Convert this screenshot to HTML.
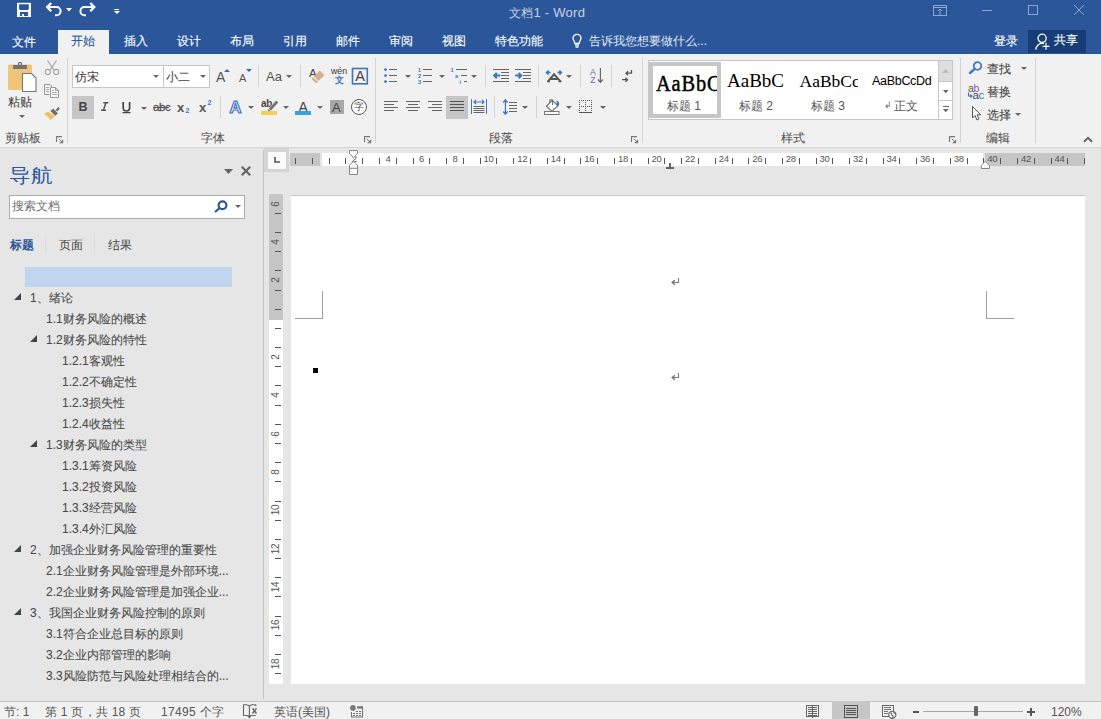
<!DOCTYPE html>
<html><head><meta charset="utf-8">
<style>
*{box-sizing:border-box}
html,body{margin:0;padding:0;width:1101px;height:719px;overflow:hidden;position:relative;font-family:"Liberation Sans",sans-serif;background:#e6e6e6}
.a{position:absolute}
.t{position:absolute;white-space:nowrap;line-height:1}
svg{position:absolute;overflow:visible}
.tab{position:absolute;top:34.8px;font-size:12px;color:#fff;line-height:1;white-space:nowrap;-webkit-text-stroke:0.12px currentColor}
.lbl{position:absolute;top:132px;font-size:12px;color:#555;line-height:1;white-space:nowrap;-webkit-text-stroke:0.08px currentColor}
.vs{position:absolute;width:1px;background:#d4d4d4}
.ni{position:absolute;font-size:12px;color:#4a4a4a;line-height:1;white-space:nowrap;-webkit-text-stroke:0.08px currentColor}
.rt{position:absolute;font-size:12px;color:#333;line-height:1;white-space:nowrap;-webkit-text-stroke:0.1px currentColor}
.dd{position:absolute;width:0;height:0;border-left:3px solid transparent;border-right:3px solid transparent;border-top:3px solid #666}
</style></head><body>
<!-- ============ TITLE BAR ============ -->
<div class="a" style="left:0;top:0;width:1101px;height:54px;background:#2b579a"></div>
<!-- save -->
<svg style="left:14px;top:0px" width="20" height="20" viewBox="0 0 20 20">
 <rect x="3" y="2.8" width="14" height="14.2" fill="#fff"/>
 <path d="M5.1,4.2 H14.8 V9 L13.9,9.9 H6 L5.1,9 Z" fill="#2b579a"/>
 <path d="M6,12 H14 V16 H10 V13.9 H8 V16 H6 Z" fill="#2b579a"/>
</svg>
<!-- undo -->
<svg style="left:42.7px;top:0px" width="20" height="20" viewBox="0 0 20 20">
 <path d="M8.2,3 L4.2,7.1 L8.2,11.2" fill="none" stroke="#fff" stroke-width="2.3"/>
 <path d="M4.8,7.1 H13.5 A4.1,4.1 0 0 1 13.5,15.3 H12" fill="none" stroke="#fff" stroke-width="2"/>
</svg>
<svg style="left:65.5px;top:7.5px" width="6" height="4" viewBox="0 0 6 4"><path d="M0,0 H6 L3,3.6 Z" fill="#fff"/></svg>
<!-- redo -->
<svg style="left:79px;top:0px" width="20" height="20" viewBox="0 0 20 20">
 <path d="M11.3,3 L15.3,7.1 L11.3,11.2" fill="none" stroke="#fff" stroke-width="2.3"/>
 <path d="M14.7,7.1 H5.5 A4.1,4.1 0 0 0 5.5,15.3 H7" fill="none" stroke="#fff" stroke-width="2"/>
</svg>
<!-- customize -->
<div class="a" style="left:114px;top:9px;width:5px;height:1px;background:#fff"></div>
<div class="dd" style="left:114px;top:11px;border-top-color:#fff;border-top-width:3.5px"></div>
<div class="t" style="left:509px;top:7px;font-size:12px;color:#c8d2e4">文档</div><div class="t" style="left:533.5px;top:5.8px;font-size:13px;color:#c8d2e4;letter-spacing:0.25px">1 - Word</div>
<!-- window controls -->
<svg style="left:933px;top:5px" width="15" height="11" viewBox="0 0 15 11">
 <rect x="0.5" y="0.5" width="13" height="10" fill="none" stroke="#8ea6cc" stroke-width="1"/>
 <path d="M0.5,2.5 H13.5 M7,4 V10 M5,6 L7,4 L9,6" fill="none" stroke="#8ea6cc" stroke-width="1"/>
</svg>
<div class="a" style="left:982px;top:10px;width:10px;height:1px;background:#8ea6cc"></div>
<div class="a" style="left:1028px;top:5px;width:10px;height:10px;border:1px solid #8ea6cc"></div>
<svg style="left:1074px;top:5px" width="10" height="10" viewBox="0 0 10 10">
 <path d="M0,0 L10,10 M10,0 L0,10" stroke="#8ea6cc" stroke-width="1"/>
</svg>
<!-- tabs -->
<div class="a" style="left:58px;top:30px;width:51px;height:24px;background:#f1f1f1"></div>
<div class="tab" style="left:12px;top:35.7px">文件</div>
<div class="tab" style="left:71px;color:#2b579a">开始</div>
<div class="tab" style="left:124px">插入</div>
<div class="tab" style="left:177px">设计</div>
<div class="tab" style="left:230px">布局</div>
<div class="tab" style="left:283px">引用</div>
<div class="tab" style="left:336px">邮件</div>
<div class="tab" style="left:389px">审阅</div>
<div class="tab" style="left:442px">视图</div>
<div class="tab" style="left:495px">特色功能</div>
<svg style="left:572px;top:34px" width="10" height="14" viewBox="0 0 10 14">
 <path d="M2.7,9.3 C2.7,7 1,5.8 1,4.3 A4,4 0 0 1 9,4.3 C9,5.8 7.3,7 7.3,9.3 Z M3,11 H7 M3.5,13 H6.5" fill="none" stroke="#fff" stroke-width="1.3"/>
</svg>
<div class="tab" style="left:589px;color:#e4eaf3;-webkit-text-stroke:0">告诉我您想要做什么...</div>
<div class="tab" style="left:994px">登录</div>
<div class="a" style="left:1028px;top:30px;width:58px;height:23px;background:#173d76"></div>
<svg style="left:1035px;top:33px" width="17" height="18" viewBox="0 0 17 18">
 <circle cx="7.1" cy="5.3" r="4.1" fill="none" stroke="#fff" stroke-width="1.3"/>
 <path d="M0.8,16.6 C1.5,12.5 4,10.3 7.2,10.3 C7.8,10.3 8.3,10.4 8.8,10.5" fill="none" stroke="#fff" stroke-width="1.3"/>
 <path d="M11,9.8 V16.8 M7.5,13.3 H14.5" stroke="#fff" stroke-width="1.2"/>
</svg>
<div class="tab" style="left:1054px;top:34.3px">共享</div>
<!-- ============ RIBBON ============ -->
<div class="a" style="left:0;top:54px;width:1101px;height:94px;background:#f1f1f1;border-bottom:1px solid #d6d6d6"></div>
<!-- clipboard group -->
<svg style="left:8px;top:61px" width="30" height="32" viewBox="0 0 30 32">
 <rect x="0" y="3.5" width="24" height="25.5" rx="1.5" fill="#f0c57a"/>
 <path d="M5,4 H19 V8 H5 Z" fill="#737373"/>
 <rect x="10" y="1" width="4" height="4" rx="1" fill="#737373"/>
 <rect x="11.2" y="2.2" width="1.6" height="1.6" fill="#f1f1f1"/>
 <path d="M14.5,12.5 H23.5 L28,17 V30.5 H14.5 Z" fill="#fff" stroke="#777" stroke-width="1.1"/>
</svg>
<div class="rt" style="left:8px;top:96px;color:#444">粘贴</div>
<div class="dd" style="left:19px;top:115px;border-top-color:#666"></div>
<svg style="left:44px;top:60px" width="16" height="16" viewBox="0 0 16 16">
 <path d="M3.5,0.5 L10,10 M12.5,0.5 L6,10" stroke="#a6a6a6" stroke-width="1.3"/>
 <circle cx="3.8" cy="12" r="2.6" fill="none" stroke="#a6a6a6" stroke-width="1.1"/>
 <circle cx="12.2" cy="12" r="2.6" fill="none" stroke="#a6a6a6" stroke-width="1.1"/>
</svg>
<svg style="left:40px;top:80px" width="24" height="44" viewBox="0 0 24 44">
 <path d="M4.5,4.5 H10 L11.5,6 V7" fill="none" stroke="#999" stroke-width="1"/>
 <path d="M4.5,4.5 V14.5 H9.5" fill="none" stroke="#999" stroke-width="1"/>
 <path d="M10.5,7.5 H15.5 L18.5,10.5 V17.5 H10.5 Z" fill="#fff" stroke="#999" stroke-width="1"/>
 <path d="M15.5,7.5 V10.5 H18.5" fill="none" stroke="#999" stroke-width="1"/>
 <g fill="#a6a6a6" shape-rendering="crispEdges"><rect x="6" y="7" width="3" height="1"/><rect x="6" y="9" width="3" height="1"/><rect x="6" y="11" width="3" height="1"/>
 <rect x="12" y="10" width="2" height="1"/><rect x="12" y="12" width="5" height="1"/><rect x="12" y="14" width="5" height="1"/></g>
 <path d="M4,33.4 L8,31.8 L15,36.1 L11,40.1 Z" fill="#f0c060"/>
 <path d="M10.4,30.9 L13.2,28.5 L18,33.4 L15.3,35.8 Z" fill="#6e6e6e"/>
 <path d="M15.6,30 L18.4,27 L19.9,28.8 L17.1,31.5 Z" fill="#6e6e6e"/>
</svg>
<div class="lbl" style="left:5px">剪贴板</div>
<svg style="left:56px;top:136px" width="8" height="8" viewBox="0 0 8 8"><path d="M0.5,6 V0.6 H6" fill="none" stroke="#777" stroke-width="1.1"/><path d="M7.2,3.2 V7.2 H3.2 Z" fill="#777"/><path d="M2.8,2.8 L5.5,5.5" stroke="#777" stroke-width="1"/></svg>
<div class="vs" style="left:67px;top:58px;height:85px"></div>

<!-- font group -->
<div class="a" style="left:72px;top:65px;width:92px;height:23px;background:#fff;border:1px solid #c6c6c6"></div>
<div class="a" style="left:163px;top:65px;width:47px;height:23px;background:#fff;border:1px solid #c6c6c6"></div>
<div class="rt" style="left:75px;top:70.8px;color:#444">仿宋</div>
<div class="dd" style="left:153px;top:75px"></div>
<div class="rt" style="left:166px;top:70.8px;color:#444">小二</div>
<div class="dd" style="left:200px;top:75px"></div>
<!-- grow/shrink -->
<div class="t" style="left:216px;top:70px;font-size:14px;color:#555">A</div>
<svg style="left:224px;top:69px" width="6" height="4" viewBox="0 0 6 4"><path d="M0,3 L3,0 L6,3 Z" fill="#2b6cc4"/></svg>
<div class="t" style="left:239px;top:73px;font-size:11px;color:#555">A</div>
<svg style="left:246px;top:69px" width="6" height="4" viewBox="0 0 6 4"><path d="M0,0 L6,0 L3,3 Z" fill="#2b6cc4"/></svg>
<div class="vs" style="left:258px;top:65px;height:22px"></div>
<div class="t" style="left:266px;top:70px;font-size:13px;color:#555">Aa</div>
<div class="dd" style="left:286px;top:75px"></div>
<div class="vs" style="left:300px;top:65px;height:22px"></div>
<!-- clear formatting -->
<div class="t" style="left:309px;top:68px;font-size:11.5px;color:#444">A</div>
<svg style="left:305px;top:62px" width="67" height="26" viewBox="0 0 67 26">
 <g transform="translate(13,15) rotate(-45)">
  <rect x="-6" y="-3.3" width="12" height="6.6" rx="1" fill="#d9b08c"/>
  <rect x="-3.6" y="-4" width="1.1" height="8" fill="#f1f1f1"/>
 </g>
 <rect x="47.5" y="6.5" width="14.8" height="15.3" fill="none" stroke="#3f74ba" stroke-width="1.6"/>
</svg>
<div class="t" style="left:331px;top:67px;font-size:8.8px;color:#333;letter-spacing:0px">wén</div>
<div class="t" style="left:334.5px;top:75.5px;font-size:9px;color:#3f74ba;font-weight:bold">文</div>
<div class="t" style="left:355.2px;top:68.6px;font-size:14.5px;color:#444">A</div>
<!-- row 2 -->
<div class="a" style="left:72px;top:96px;width:22px;height:23px;background:#c6c6c6"></div>
<div class="t" style="left:78.5px;top:100.8px;font-size:12.5px;font-weight:bold;color:#444">B</div>
<svg style="left:70px;top:94px" width="150" height="28" viewBox="0 0 150 28">
 <path d="M33.3,8.7 H38.3 M31,16.3 H36 M35.9,8.7 L33.4,16.3" fill="none" stroke="#555" stroke-width="1.5"/>
 <path d="M53.2,8 V13.5 C53.2,16 54.5,17 56.4,17 C58.3,17 59.6,16 59.6,13.5 V8" fill="none" stroke="#444" stroke-width="1.7"/>
 <rect x="52.5" y="18" width="8" height="1.2" fill="#444"/>
 <rect x="83" y="13" width="16" height="1" fill="#555"/>
</svg>
<div class="dd" style="left:141px;top:107px"></div>
<div class="t" style="left:153px;top:101.5px;font-size:11.5px;color:#555;letter-spacing:-0.4px;-webkit-text-stroke:0.3px #555">abc</div>
<div class="t" style="left:177px;top:100.5px;font-size:13px;font-weight:bold;color:#555">x</div>
<div class="t" style="left:185.5px;top:107px;font-size:7px;font-weight:bold;color:#3f74ba">2</div>
<div class="t" style="left:199px;top:100.5px;font-size:13px;font-weight:bold;color:#555">x</div>
<div class="t" style="left:207.5px;top:99px;font-size:7px;font-weight:bold;color:#3f74ba">2</div>
<div class="vs" style="left:220px;top:96px;height:22px"></div>
<!-- text effects -->
<svg style="left:228px;top:98px" width="16" height="17" viewBox="0 0 16 17"><text x="1.6" y="14.6" font-size="16.5" font-weight="bold" font-family="Liberation Sans" fill="#fff" stroke="#3f74ba" stroke-width="1.2">A</text></svg>
<div class="dd" style="left:248px;top:106px"></div>
<!-- highlight -->
<div class="t" style="left:261px;top:98.5px;font-size:10px;color:#444;font-weight:bold;letter-spacing:-0.3px">ab</div>
<svg style="left:260px;top:96px" width="20" height="18" viewBox="0 0 20 18">
 <path d="M8.6,12.6 L16.2,4.2 L18.6,6.4 L11,14.8 Z" fill="#707070" stroke="#f1f1f1" stroke-width="0.6"/>
 <path d="M8.4,13 L10.6,15 L7.5,16.2 Z" fill="#707070"/>
</svg>
<div class="a" style="left:261px;top:111px;width:16px;height:4px;background:#f5cf4f"></div>
<div class="dd" style="left:283px;top:106px"></div>
<!-- font color -->
<div class="t" style="left:298.5px;top:100px;font-size:14px;color:#444">A</div>
<div class="a" style="left:295px;top:111px;width:16px;height:4px;background:#3aa0e4"></div>
<div class="dd" style="left:317px;top:106px"></div>
<!-- char shading -->
<div class="a" style="left:330px;top:100px;width:14px;height:14px;background:#a8a8a8"></div>
<div class="t" style="left:332px;top:101px;font-size:13px;color:#444">A</div>
<!-- enclosed -->
<svg style="left:351px;top:99px" width="16" height="16" viewBox="0 0 16 16"><circle cx="8" cy="8" r="7.5" fill="#fff" stroke="#555" stroke-width="1"/></svg>
<div class="t" style="left:354px;top:102px;font-size:10px;color:#444">字</div>
<div class="lbl" style="left:201px">字体</div>
<svg style="left:364px;top:136px" width="8" height="8" viewBox="0 0 8 8"><path d="M0.5,6 V0.6 H6" fill="none" stroke="#777" stroke-width="1.1"/><path d="M7.2,3.2 V7.2 H3.2 Z" fill="#777"/><path d="M2.8,2.8 L5.5,5.5" stroke="#777" stroke-width="1"/></svg>
<div class="vs" style="left:375px;top:58px;height:85px"></div>
<!-- paragraph group -->
<svg style="left:380px;top:62px" width="100" height="26" viewBox="0 0 100 26" shape-rendering="crispEdges">
 <g fill="#666"><rect x="9" y="7" width="8" height="1.3"/><rect x="9" y="13" width="8" height="1.3"/><rect x="9" y="19" width="8" height="1.3"/>
 <rect x="43" y="7" width="9" height="1.3"/><rect x="43" y="13" width="9" height="1.3"/><rect x="43" y="19" width="9" height="1.3"/>
 <rect x="76" y="7" width="11" height="1.3"/><rect x="81" y="13" width="6" height="1.3"/><rect x="84" y="19" width="3" height="1.3"/></g>
</svg>
<svg style="left:380px;top:62px" width="100" height="26" viewBox="0 0 100 26">
 <g fill="#3f74ba"><circle cx="5.5" cy="7.6" r="1.4"/><circle cx="5.5" cy="13.6" r="1.4"/><circle cx="5.5" cy="19.6" r="1.4"/></g>
 <g fill="#3f74ba" font-family="Liberation Sans" font-weight="bold" font-size="5.5">
 <text x="38" y="10">1</text><text x="38" y="16">2</text><text x="38" y="22">3</text>
 <text x="70.5" y="10">1</text><text x="75" y="16">a</text><text x="79.5" y="22">i</text></g>
</svg>
<div class="dd" style="left:405px;top:75px"></div>
<div class="dd" style="left:439px;top:75px"></div>
<div class="dd" style="left:471px;top:75px"></div>
<div class="vs" style="left:485px;top:65px;height:22px"></div>
<svg style="left:490px;top:64px" width="50" height="22" viewBox="0 0 50 22" shape-rendering="crispEdges">
 <g fill="#666"><rect x="3" y="5" width="16" height="1.2"/><rect x="11" y="8" width="8" height="1.2"/><rect x="11" y="11" width="8" height="1.2"/><rect x="11" y="14" width="8" height="1.2"/><rect x="3" y="17" width="16" height="1.2"/>
 <rect x="25" y="5" width="16" height="1.2"/><rect x="33" y="8" width="8" height="1.2"/><rect x="33" y="11" width="8" height="1.2"/><rect x="33" y="14" width="8" height="1.2"/><rect x="25" y="17" width="16" height="1.2"/></g>
</svg>
<svg style="left:490px;top:64px" width="50" height="22" viewBox="0 0 50 22">
 <path d="M10.3,11.6 H4.5 M6.8,9 L4.2,11.6 L6.8,14.2" fill="none" stroke="#3f74ba" stroke-width="2"/>
 <path d="M25.2,11.6 H31 M28.7,9 L31.3,11.6 L28.7,14.2" fill="none" stroke="#3f74ba" stroke-width="2"/>
</svg>
<div class="vs" style="left:538px;top:65px;height:22px"></div>
<svg style="left:540px;top:64px" width="96" height="22" viewBox="0 0 96 22">
 <path d="M6.5,8.5 H10.5 M8.6,6.6 L6.6,8.6 L8.6,10.6" fill="none" stroke="#3f74ba" stroke-width="1.6"/>
 <path d="M21.5,8.5 H17.5 M19.4,6.6 L21.4,8.6 L19.4,10.6" fill="none" stroke="#3f74ba" stroke-width="1.6"/>
 <path d="M8,17.4 L14,10.3 L20.5,17.4 M10.5,15 H17.5" fill="none" stroke="#555" stroke-width="2"/>
 <path d="M7,17.4 H10 M18.5,17.4 H21.5" stroke="#555" stroke-width="1.5"/>
 <text x="50" y="10.6" font-size="8.8" font-family="Liberation Sans" fill="#3f74ba">A</text>
 <text x="50.3" y="18.8" font-size="8.5" font-family="Liberation Sans" fill="#7d5fa8">Z</text>
 <path d="M60.4,4 V18.5 M57.9,15.5 L60.4,18.3 L62.9,15.5" fill="none" stroke="#666" stroke-width="1.2"/>
 <path d="M91.5,6 V9.2 H86 M88,7.2 L86,9.2 L88,11.2" fill="none" stroke="#555" stroke-width="1.3"/>
 <path d="M82,15.7 H87.5 M85.5,13.7 L87.5,15.7 L85.5,17.7" fill="none" stroke="#555" stroke-width="1.3"/>
</svg>
<div class="dd" style="left:566px;top:75px"></div>
<div class="vs" style="left:580px;top:65px;height:22px"></div>
<div class="vs" style="left:611px;top:65px;height:22px"></div>
<!-- row 2 -->
<svg style="left:384px;top:101px" width="15" height="12" viewBox="0 0 15 12">
 <path d="M0,0.5 H14 M0,3.5 H10 M0,6.5 H14 M0,9.5 H10" stroke="#666" stroke-width="1"/>
</svg>
<svg style="left:406px;top:101px" width="15" height="12" viewBox="0 0 15 12">
 <path d="M0,0.5 H14 M2,3.5 H12 M0,6.5 H14 M2,9.5 H12" stroke="#666" stroke-width="1"/>
</svg>
<svg style="left:428px;top:101px" width="15" height="12" viewBox="0 0 15 12">
 <path d="M0,0.5 H14 M4,3.5 H14 M0,6.5 H14 M4,9.5 H14" stroke="#666" stroke-width="1"/>
</svg>
<div class="a" style="left:446px;top:96px;width:22px;height:23px;background:#c6c6c6"></div>
<svg style="left:450px;top:101px" width="15" height="12" viewBox="0 0 15 12">
 <path d="M0,0.5 H14 M0,3.5 H14 M0,6.5 H14 M0,9.5 H14" stroke="#555" stroke-width="1"/>
</svg>
<svg style="left:471px;top:99px" width="16" height="16" viewBox="0 0 16 16">
 <path d="M0.5,0 V15 M15.5,0 V15" stroke="#3c78c3" stroke-width="1"/>
 <path d="M3,3 H13 M5,1 L3,3 L5,5 M11,1 L13,3 L11,5" fill="none" stroke="#3c78c3" stroke-width="1.2"/>
 <path d="M2.5,7.5 H13.5 M2.5,9.5 H13.5 M2.5,11.5 H13.5 M2.5,13.5 H13.5" stroke="#666" stroke-width="1"/>
</svg>
<div class="vs" style="left:494px;top:96px;height:22px"></div>
<svg style="left:498px;top:96px" width="112" height="22" viewBox="0 0 112 22">
 <path d="M7.4,3.8 V18.2" stroke="#3f74ba" stroke-width="1.2"/>
 <path d="M5.2,6.4 L7.4,4 L9.6,6.4 M5.2,15.6 L7.4,18 L9.6,15.6" fill="none" stroke="#3f74ba" stroke-width="1.5"/>
 <g fill="#666" shape-rendering="crispEdges"><rect x="11" y="6" width="8" height="1.2"/><rect x="11" y="9" width="8" height="1.2"/><rect x="11" y="12" width="8" height="1.2"/><rect x="11" y="15" width="8" height="1.2"/></g>
 <path d="M48.5,10.2 L54.3,4.4 L59.8,9.8 L54,15.3 Z" fill="#fff" stroke="#666" stroke-width="1.1"/>
 <path d="M51.8,7 V3.8 H54.6 V9" fill="none" stroke="#666" stroke-width="1"/>
 <path d="M58.5,4.5 C61.5,5.5 62,8 60,10.5 L58.8,9 Z" fill="#3f74ba"/>
 <rect x="46.5" y="15.5" width="14.5" height="3" fill="#fff" stroke="#777" stroke-width="1"/>
</svg>
<svg style="left:0;top:0" width="1101" height="150" viewBox="0 0 1101 150" shape-rendering="crispEdges">
 <g fill="#555"><rect x="579" y="100" width="1" height="1"/><rect x="579" y="106" width="1" height="1"/><rect x="581" y="100" width="1" height="1"/><rect x="581" y="106" width="1" height="1"/><rect x="583" y="100" width="1" height="1"/><rect x="583" y="106" width="1" height="1"/><rect x="585" y="100" width="1" height="1"/><rect x="585" y="106" width="1" height="1"/><rect x="587" y="100" width="1" height="1"/><rect x="587" y="106" width="1" height="1"/><rect x="589" y="100" width="1" height="1"/><rect x="589" y="106" width="1" height="1"/><rect x="591" y="100" width="1" height="1"/><rect x="591" y="106" width="1" height="1"/><rect x="579" y="102" width="1" height="1"/><rect x="585" y="102" width="1" height="1"/><rect x="591" y="102" width="1" height="1"/><rect x="579" y="104" width="1" height="1"/><rect x="585" y="104" width="1" height="1"/><rect x="591" y="104" width="1" height="1"/><rect x="579" y="106" width="1" height="1"/><rect x="585" y="106" width="1" height="1"/><rect x="591" y="106" width="1" height="1"/><rect x="579" y="108" width="1" height="1"/><rect x="585" y="108" width="1" height="1"/><rect x="591" y="108" width="1" height="1"/><rect x="579" y="110" width="1" height="1"/><rect x="585" y="110" width="1" height="1"/><rect x="591" y="110" width="1" height="1"/><rect x="579" y="112" width="13" height="1.2"/></g>
</svg>
<div class="dd" style="left:522px;top:106px"></div>
<div class="vs" style="left:536px;top:96px;height:22px"></div>
<div class="dd" style="left:566px;top:106px"></div>
<div class="dd" style="left:600px;top:106px"></div>
<div class="lbl" style="left:489px">段落</div>
<svg style="left:631px;top:136px" width="8" height="8" viewBox="0 0 8 8"><path d="M0.5,6 V0.6 H6" fill="none" stroke="#777" stroke-width="1.1"/><path d="M7.2,3.2 V7.2 H3.2 Z" fill="#777"/><path d="M2.8,2.8 L5.5,5.5" stroke="#777" stroke-width="1"/></svg>
<div class="vs" style="left:642px;top:58px;height:85px"></div>

<!-- styles gallery -->
<div class="a" style="left:648px;top:60px;width:291px;height:60px;background:#fff;border:1px solid #c6c6c6"></div>
<div class="a" style="left:649px;top:62px;width:72px;height:56px;border:4px solid #c6c6c6"></div>
<div class="a" style="left:653px;top:66px;width:64px;height:30px;overflow:hidden"><div class="t" style="left:3px;top:5px;font-size:24px;font-family:'Liberation Serif',serif;color:#000;transform:scaleX(0.85);transform-origin:0 0;letter-spacing:1px;-webkit-text-stroke:0.5px #000">AaBbCcDd</div></div>
<div class="t" style="left:667px;top:100px;font-size:12px;color:#555">标题 1</div>
<div class="t" style="left:727px;top:71.3px;font-size:19px;font-family:'Liberation Serif',serif;color:#000">AaBbC</div>
<div class="t" style="left:739px;top:100px;font-size:12px;color:#555">标题 2</div>
<div class="a" style="left:799px;top:70px;width:59px;height:20px;overflow:hidden"><div class="t" style="left:0.5px;top:3px;font-size:17.5px;font-family:'Liberation Serif',serif;color:#000">AaBbCc</div></div>
<div class="t" style="left:811px;top:100px;font-size:12px;color:#555">标题 3</div>
<div class="t" style="left:872px;top:75px;font-size:12.5px;color:#000;letter-spacing:-0.3px">AaBbCcDd</div>
<div class="t" style="left:883.5px;top:101px;font-size:9px;color:#666">↲</div>
<div class="t" style="left:894px;top:100px;font-size:12px;color:#555">正文</div>
<!-- gallery scroll -->
<div class="a" style="left:938px;top:60px;width:15px;height:60px;background:#fff;border:1px solid #c6c6c6"></div>
<div class="a" style="left:939px;top:61px;width:13px;height:20px;background:#dedede"></div>
<div class="a" style="left:939px;top:81px;width:13px;height:1px;background:#c6c6c6"></div>
<div class="a" style="left:939px;top:100px;width:13px;height:1px;background:#c6c6c6"></div>
<svg style="left:942px;top:69px" width="7" height="4" viewBox="0 0 7 4"><path d="M0,4 L3.5,0 L7,4 Z" fill="#bbb"/></svg>
<svg style="left:943px;top:89.5px" width="6" height="4" viewBox="0 0 6 4"><path d="M0,0 H5.5 L2.75,3.2 Z" fill="#666"/></svg>
<div class="a" style="left:943px;top:106px;width:6px;height:1px;background:#666"></div>
<svg style="left:943px;top:109px" width="6" height="4" viewBox="0 0 6 4"><path d="M0,0 H5.5 L2.75,3.2 Z" fill="#666"/></svg>
<div class="lbl" style="left:781px">样式</div>
<svg style="left:949px;top:136px" width="8" height="8" viewBox="0 0 8 8"><path d="M0.5,6 V0.6 H6" fill="none" stroke="#777" stroke-width="1.1"/><path d="M7.2,3.2 V7.2 H3.2 Z" fill="#777"/><path d="M2.8,2.8 L5.5,5.5" stroke="#777" stroke-width="1"/></svg>
<div class="vs" style="left:960px;top:58px;height:85px"></div>

<!-- editing -->
<svg style="left:969px;top:61px" width="14" height="13" viewBox="0 0 14 13">
 <circle cx="8.5" cy="5" r="3.8" fill="none" stroke="#3c78c3" stroke-width="1.8"/>
 <path d="M5.8,7.8 L1,12" stroke="#3c78c3" stroke-width="2.4" stroke-linecap="round"/>
</svg>
<div class="rt" style="left:987px;top:62.7px;color:#444">查找</div>
<div class="dd" style="left:1021px;top:67px"></div>
<div class="t" style="left:968px;top:82.8px;font-size:10.5px;color:#555;letter-spacing:-0.3px">a<span style="color:#7d5fa8">b</span></div>
<div class="t" style="left:972.5px;top:89.5px;font-size:11.5px;color:#444;letter-spacing:-0.5px">a<span style="color:#3f74ba">c</span></div>
<svg style="left:967px;top:92px" width="6" height="6" viewBox="0 0 6 6"><path d="M1.5,0.5 V4 H5 M3.3,2.5 L5,4 L3.3,5.5" fill="none" stroke="#3f74ba" stroke-width="1.1"/></svg>
<div class="rt" style="left:987px;top:86px;color:#444">替换</div>
<svg style="left:972px;top:106px" width="10" height="15" viewBox="0 0 10 15">
 <path d="M0.5,0.5 V12 L3,9.5 L5,14 L7,13 L5,8.8 L8.8,8.8 Z" fill="#fff" stroke="#555" stroke-width="1" stroke-linejoin="round"/>
</svg>
<div class="rt" style="left:987px;top:108.5px;color:#444">选择</div>
<div class="dd" style="left:1015px;top:113px"></div>
<div class="lbl" style="left:986px">编辑</div>
<div class="vs" style="left:1035px;top:58px;height:85px"></div>
<svg style="left:1083px;top:136px" width="10" height="7" viewBox="0 0 10 7"><path d="M1,5.8 L5,1.8 L9,5.8" fill="none" stroke="#666" stroke-width="2"/></svg>
<!-- ============ NAV PANE ============ -->
<div class="a" style="left:263px;top:150px;width:1px;height:549px;background:#c4c4c4"></div>
<div class="t" style="left:8.5px;top:165px;font-size:21px;color:#2b579a;transform:scale(1.04,0.92);transform-origin:0 0">导航</div>
<svg style="left:224px;top:169px" width="9" height="5" viewBox="0 0 9 5"><path d="M0,0 H9 L4.5,5 Z" fill="#666"/></svg>
<svg style="left:241px;top:166px" width="10" height="10" viewBox="0 0 10 10"><path d="M0.8,0.8 L9.2,9.2 M9.2,0.8 L0.8,9.2" stroke="#666" stroke-width="2.2"/></svg>
<div class="a" style="left:9px;top:195px;width:236px;height:24px;background:#fff;border:1px solid #ababab"></div>
<div class="t" style="left:12px;top:200px;font-size:12px;color:#707070">搜索文档</div>
<svg style="left:213px;top:200px" width="15" height="13" viewBox="0 0 15 13">
 <circle cx="9.5" cy="5.2" r="3.9" fill="none" stroke="#2b579a" stroke-width="2.2"/>
 <path d="M6.7,8 L2,12" stroke="#2b579a" stroke-width="2.2" stroke-linecap="butt"/>
</svg>
<div class="dd" style="left:235px;top:205px"></div>
<div class="t" style="left:10px;top:238.7px;font-size:12px;color:#2b579a;font-weight:bold">标题</div>
<div class="a" style="left:45px;top:234px;width:1px;height:19px;background:#dcdcdc"></div>
<div class="t" style="left:59px;top:238.7px;font-size:12px;color:#444">页面</div>
<div class="a" style="left:94px;top:234px;width:1px;height:19px;background:#dcdcdc"></div>
<div class="t" style="left:108px;top:238.7px;font-size:12px;color:#444">结果</div>
<div class="a" style="left:25px;top:267px;width:207px;height:20px;background:#c1d5f0"></div>
<!-- tree -->
<svg style="left:14px;top:293px" width="7" height="7" viewBox="0 0 7 7"><path d="M7,0 V7 H0 Z" fill="#444"/></svg>
<div class="ni" style="left:30px;top:292px">1、绪论</div>
<div class="ni" style="left:46px;top:313px">1.1财务风险的概述</div>
<svg style="left:30px;top:335px" width="7" height="7" viewBox="0 0 7 7"><path d="M7,0 V7 H0 Z" fill="#444"/></svg>
<div class="ni" style="left:46px;top:334px">1.2财务风险的特性</div>
<div class="ni" style="left:62px;top:355px">1.2.1客观性</div>
<div class="ni" style="left:62px;top:376px">1.2.2不确定性</div>
<div class="ni" style="left:62px;top:397px">1.2.3损失性</div>
<div class="ni" style="left:62px;top:418px">1.2.4收益性</div>
<svg style="left:30px;top:440px" width="7" height="7" viewBox="0 0 7 7"><path d="M7,0 V7 H0 Z" fill="#444"/></svg>
<div class="ni" style="left:46px;top:439px">1.3财务风险的类型</div>
<div class="ni" style="left:62px;top:460px">1.3.1筹资风险</div>
<div class="ni" style="left:62px;top:481px">1.3.2投资风险</div>
<div class="ni" style="left:62px;top:502px">1.3.3经营风险</div>
<div class="ni" style="left:62px;top:523px">1.3.4外汇风险</div>
<svg style="left:14px;top:545px" width="7" height="7" viewBox="0 0 7 7"><path d="M7,0 V7 H0 Z" fill="#444"/></svg>
<div class="ni" style="left:30px;top:544px">2、加强企业财务风险管理的重要性</div>
<div class="ni" style="left:46px;top:565px">2.1企业财务风险管理是外部环境...</div>
<div class="ni" style="left:46px;top:586px">2.2企业财务风险管理是加强企业...</div>
<svg style="left:14px;top:608px" width="7" height="7" viewBox="0 0 7 7"><path d="M7,0 V7 H0 Z" fill="#444"/></svg>
<div class="ni" style="left:30px;top:607px">3、我国企业财务风险控制的原则</div>
<div class="ni" style="left:46px;top:628px">3.1符合企业总目标的原则</div>
<div class="ni" style="left:46px;top:649px">3.2企业内部管理的影响</div>
<div class="ni" style="left:46px;top:670px">3.3风险防范与风险处理相结合的...</div>

<!-- ============ RULERS ============ -->
<div class="a" style="left:264px;top:148px;width:25px;height:24px;background:#d4d4d4"></div>
<div class="a" style="left:268px;top:152px;width:18px;height:17px;background:#fafafa"></div>
<svg style="left:274px;top:157px" width="6" height="6" viewBox="0 0 6 6"><path d="M1,0 V5 H6" fill="none" stroke="#555" stroke-width="1.6"/></svg>
<div class="a" style="left:322px;top:153px;width:661px;height:13px;background:#fff"></div>
<div class="a" style="left:290px;top:153px;width:30px;height:13px;background:#c6c6c6"></div>
<div class="a" style="left:985px;top:153px;width:100px;height:13px;background:#c6c6c6"></div>
<div class="a" style="left:295px;top:158px;width:1px;height:6px;background:#555"></div>
<div class="a" style="left:312px;top:158px;width:1px;height:6px;background:#555"></div>
<div class="a" style="left:329px;top:158px;width:1px;height:6px;background:#555"></div>
<div class="a" style="left:345px;top:158px;width:1px;height:6px;background:#555"></div>
<div class="a" style="left:362px;top:158px;width:1px;height:6px;background:#555"></div>
<div class="a" style="left:379px;top:158px;width:1px;height:6px;background:#555"></div>
<div class="a" style="left:396px;top:158px;width:1px;height:6px;background:#555"></div>
<div class="a" style="left:413px;top:158px;width:1px;height:6px;background:#555"></div>
<div class="a" style="left:429px;top:158px;width:1px;height:6px;background:#555"></div>
<div class="a" style="left:446px;top:158px;width:1px;height:6px;background:#555"></div>
<div class="a" style="left:463px;top:158px;width:1px;height:6px;background:#555"></div>
<div class="a" style="left:480px;top:158px;width:1px;height:6px;background:#555"></div>
<div class="a" style="left:496px;top:158px;width:1px;height:6px;background:#555"></div>
<div class="a" style="left:513px;top:158px;width:1px;height:6px;background:#555"></div>
<div class="a" style="left:530px;top:158px;width:1px;height:6px;background:#555"></div>
<div class="a" style="left:547px;top:158px;width:1px;height:6px;background:#555"></div>
<div class="a" style="left:564px;top:158px;width:1px;height:6px;background:#555"></div>
<div class="a" style="left:580px;top:158px;width:1px;height:6px;background:#555"></div>
<div class="a" style="left:597px;top:158px;width:1px;height:6px;background:#555"></div>
<div class="a" style="left:614px;top:158px;width:1px;height:6px;background:#555"></div>
<div class="a" style="left:631px;top:158px;width:1px;height:6px;background:#555"></div>
<div class="a" style="left:648px;top:158px;width:1px;height:6px;background:#555"></div>
<div class="a" style="left:664px;top:158px;width:1px;height:6px;background:#555"></div>
<div class="a" style="left:681px;top:158px;width:1px;height:6px;background:#555"></div>
<div class="a" style="left:698px;top:158px;width:1px;height:6px;background:#555"></div>
<div class="a" style="left:715px;top:158px;width:1px;height:6px;background:#555"></div>
<div class="a" style="left:732px;top:158px;width:1px;height:6px;background:#555"></div>
<div class="a" style="left:748px;top:158px;width:1px;height:6px;background:#555"></div>
<div class="a" style="left:765px;top:158px;width:1px;height:6px;background:#555"></div>
<div class="a" style="left:782px;top:158px;width:1px;height:6px;background:#555"></div>
<div class="a" style="left:799px;top:158px;width:1px;height:6px;background:#555"></div>
<div class="a" style="left:816px;top:158px;width:1px;height:6px;background:#555"></div>
<div class="a" style="left:832px;top:158px;width:1px;height:6px;background:#555"></div>
<div class="a" style="left:849px;top:158px;width:1px;height:6px;background:#555"></div>
<div class="a" style="left:866px;top:158px;width:1px;height:6px;background:#555"></div>
<div class="a" style="left:883px;top:158px;width:1px;height:6px;background:#555"></div>
<div class="a" style="left:899px;top:158px;width:1px;height:6px;background:#555"></div>
<div class="a" style="left:916px;top:158px;width:1px;height:6px;background:#555"></div>
<div class="a" style="left:933px;top:158px;width:1px;height:6px;background:#555"></div>
<div class="a" style="left:950px;top:158px;width:1px;height:6px;background:#555"></div>
<div class="a" style="left:967px;top:158px;width:1px;height:6px;background:#555"></div>
<div class="a" style="left:983px;top:158px;width:1px;height:6px;background:#555"></div>
<div class="a" style="left:1000px;top:158px;width:1px;height:6px;background:#555"></div>
<div class="a" style="left:1017px;top:158px;width:1px;height:6px;background:#555"></div>
<div class="a" style="left:1034px;top:158px;width:1px;height:6px;background:#555"></div>
<div class="a" style="left:1051px;top:158px;width:1px;height:6px;background:#555"></div>
<div class="a" style="left:1067px;top:158px;width:1px;height:6px;background:#555"></div>
<div class="a" style="left:1084px;top:158px;width:1px;height:6px;background:#555"></div>
<div class="t" style="left:347.3px;top:154.3px;width:14px;text-align:center;font-size:9.5px;color:#555;letter-spacing:-0.3px">2</div>
<div class="t" style="left:380.9px;top:154.3px;width:14px;text-align:center;font-size:9.5px;color:#555;letter-spacing:-0.3px">4</div>
<div class="t" style="left:414.4px;top:154.3px;width:14px;text-align:center;font-size:9.5px;color:#555;letter-spacing:-0.3px">6</div>
<div class="t" style="left:448.0px;top:154.3px;width:14px;text-align:center;font-size:9.5px;color:#555;letter-spacing:-0.3px">8</div>
<div class="t" style="left:481.6px;top:154.3px;width:14px;text-align:center;font-size:9.5px;color:#555;letter-spacing:-0.3px">10</div>
<div class="t" style="left:515.2px;top:154.3px;width:14px;text-align:center;font-size:9.5px;color:#555;letter-spacing:-0.3px">12</div>
<div class="t" style="left:548.8px;top:154.3px;width:14px;text-align:center;font-size:9.5px;color:#555;letter-spacing:-0.3px">14</div>
<div class="t" style="left:582.3px;top:154.3px;width:14px;text-align:center;font-size:9.5px;color:#555;letter-spacing:-0.3px">16</div>
<div class="t" style="left:615.9px;top:154.3px;width:14px;text-align:center;font-size:9.5px;color:#555;letter-spacing:-0.3px">18</div>
<div class="t" style="left:649.5px;top:154.3px;width:14px;text-align:center;font-size:9.5px;color:#555;letter-spacing:-0.3px">20</div>
<div class="t" style="left:683.1px;top:154.3px;width:14px;text-align:center;font-size:9.5px;color:#555;letter-spacing:-0.3px">22</div>
<div class="t" style="left:716.7px;top:154.3px;width:14px;text-align:center;font-size:9.5px;color:#555;letter-spacing:-0.3px">24</div>
<div class="t" style="left:750.2px;top:154.3px;width:14px;text-align:center;font-size:9.5px;color:#555;letter-spacing:-0.3px">26</div>
<div class="t" style="left:783.8px;top:154.3px;width:14px;text-align:center;font-size:9.5px;color:#555;letter-spacing:-0.3px">28</div>
<div class="t" style="left:817.4px;top:154.3px;width:14px;text-align:center;font-size:9.5px;color:#555;letter-spacing:-0.3px">30</div>
<div class="t" style="left:851.0px;top:154.3px;width:14px;text-align:center;font-size:9.5px;color:#555;letter-spacing:-0.3px">32</div>
<div class="t" style="left:884.6px;top:154.3px;width:14px;text-align:center;font-size:9.5px;color:#555;letter-spacing:-0.3px">34</div>
<div class="t" style="left:918.1px;top:154.3px;width:14px;text-align:center;font-size:9.5px;color:#555;letter-spacing:-0.3px">36</div>
<div class="t" style="left:951.7px;top:154.3px;width:14px;text-align:center;font-size:9.5px;color:#555;letter-spacing:-0.3px">38</div>
<div class="t" style="left:985.3px;top:154.3px;width:14px;text-align:center;font-size:9.5px;color:#555;letter-spacing:-0.3px">40</div>
<div class="t" style="left:1018.9px;top:154.3px;width:14px;text-align:center;font-size:9.5px;color:#555;letter-spacing:-0.3px">42</div>
<div class="t" style="left:1052.5px;top:154.3px;width:14px;text-align:center;font-size:9.5px;color:#555;letter-spacing:-0.3px">44</div>
<svg style="left:340px;top:146px" width="30" height="32" viewBox="0 0 30 32">
 <path d="M9.5,4.5 H17.5 V7.8 L13.6,11.7 L9.5,7.8 Z" fill="#fafafa" stroke="#858585" stroke-width="1"/>
 <path d="M13.6,15.2 L17.5,19.1 V28.5 H9.5 V19.1 Z" fill="#fafafa" stroke="#858585" stroke-width="1"/>
 <path d="M9.5,22.3 H17.5" stroke="#858585" stroke-width="1"/>
</svg>
<div class="a" style="left:669px;top:163px;width:2px;height:5px;background:#666"></div>
<div class="a" style="left:666px;top:167px;width:8px;height:2px;background:#666"></div>
<svg style="left:975px;top:150px" width="20" height="22" viewBox="0 0 20 22">
 <path d="M10.4,11.3 L14.5,15.3 V18.5 H6.3 V15.3 Z" fill="#fafafa" stroke="#858585" stroke-width="1"/>
</svg>

<!-- vertical ruler -->
<div class="a" style="left:269px;top:194px;width:14px;height:490px;background:#fff"></div>
<div class="a" style="left:269px;top:194px;width:14px;height:126px;background:#c6c6c6"></div>
<div class="a" style="left:275px;top:213px;width:6px;height:1px;background:#555"></div>
<div class="a" style="left:275px;top:232px;width:6px;height:1px;background:#555"></div>
<div class="a" style="left:275px;top:251px;width:6px;height:1px;background:#555"></div>
<div class="a" style="left:275px;top:270px;width:6px;height:1px;background:#555"></div>
<div class="a" style="left:275px;top:290px;width:6px;height:1px;background:#555"></div>
<div class="a" style="left:275px;top:309px;width:6px;height:1px;background:#555"></div>
<div class="a" style="left:275px;top:328px;width:6px;height:1px;background:#555"></div>
<div class="a" style="left:275px;top:347px;width:6px;height:1px;background:#555"></div>
<div class="a" style="left:275px;top:366px;width:6px;height:1px;background:#555"></div>
<div class="a" style="left:275px;top:385px;width:6px;height:1px;background:#555"></div>
<div class="a" style="left:275px;top:405px;width:6px;height:1px;background:#555"></div>
<div class="a" style="left:275px;top:424px;width:6px;height:1px;background:#555"></div>
<div class="a" style="left:275px;top:443px;width:6px;height:1px;background:#555"></div>
<div class="a" style="left:275px;top:462px;width:6px;height:1px;background:#555"></div>
<div class="a" style="left:275px;top:481px;width:6px;height:1px;background:#555"></div>
<div class="a" style="left:275px;top:501px;width:6px;height:1px;background:#555"></div>
<div class="a" style="left:275px;top:520px;width:6px;height:1px;background:#555"></div>
<div class="a" style="left:275px;top:539px;width:6px;height:1px;background:#555"></div>
<div class="a" style="left:275px;top:558px;width:6px;height:1px;background:#555"></div>
<div class="a" style="left:275px;top:577px;width:6px;height:1px;background:#555"></div>
<div class="a" style="left:275px;top:596px;width:6px;height:1px;background:#555"></div>
<div class="a" style="left:275px;top:616px;width:6px;height:1px;background:#555"></div>
<div class="a" style="left:275px;top:635px;width:6px;height:1px;background:#555"></div>
<div class="a" style="left:275px;top:654px;width:6px;height:1px;background:#555"></div>
<div class="a" style="left:275px;top:673px;width:6px;height:1px;background:#555"></div>
<div class="t" style="left:269px;top:196.7px;width:14px;height:14px;text-align:center;font-size:10px;line-height:14px;color:#555;transform:rotate(-90deg);letter-spacing:-0.3px">6</div>
<div class="t" style="left:269px;top:235.0px;width:14px;height:14px;text-align:center;font-size:10px;line-height:14px;color:#555;transform:rotate(-90deg);letter-spacing:-0.3px">4</div>
<div class="t" style="left:269px;top:273.4px;width:14px;height:14px;text-align:center;font-size:10px;line-height:14px;color:#555;transform:rotate(-90deg);letter-spacing:-0.3px">2</div>
<div class="t" style="left:269px;top:350.0px;width:14px;height:14px;text-align:center;font-size:10px;line-height:14px;color:#555;transform:rotate(-90deg);letter-spacing:-0.3px">2</div>
<div class="t" style="left:269px;top:388.4px;width:14px;height:14px;text-align:center;font-size:10px;line-height:14px;color:#555;transform:rotate(-90deg);letter-spacing:-0.3px">4</div>
<div class="t" style="left:269px;top:426.7px;width:14px;height:14px;text-align:center;font-size:10px;line-height:14px;color:#555;transform:rotate(-90deg);letter-spacing:-0.3px">6</div>
<div class="t" style="left:269px;top:465.1px;width:14px;height:14px;text-align:center;font-size:10px;line-height:14px;color:#555;transform:rotate(-90deg);letter-spacing:-0.3px">8</div>
<div class="t" style="left:269px;top:503.4px;width:14px;height:14px;text-align:center;font-size:10px;line-height:14px;color:#555;transform:rotate(-90deg);letter-spacing:-0.3px">10</div>
<div class="t" style="left:269px;top:541.7px;width:14px;height:14px;text-align:center;font-size:10px;line-height:14px;color:#555;transform:rotate(-90deg);letter-spacing:-0.3px">12</div>
<div class="t" style="left:269px;top:580.1px;width:14px;height:14px;text-align:center;font-size:10px;line-height:14px;color:#555;transform:rotate(-90deg);letter-spacing:-0.3px">14</div>
<div class="t" style="left:269px;top:618.4px;width:14px;height:14px;text-align:center;font-size:10px;line-height:14px;color:#555;transform:rotate(-90deg);letter-spacing:-0.3px">16</div>
<div class="t" style="left:269px;top:656.8px;width:14px;height:14px;text-align:center;font-size:10px;line-height:14px;color:#555;transform:rotate(-90deg);letter-spacing:-0.3px">18</div>

<!-- ============ DOCUMENT ============ -->
<div class="a" style="left:291px;top:196px;width:794px;height:488px;background:#fff"></div>
<div class="a" style="left:291px;top:195px;width:794px;height:1px;background:#c6c6c6"></div>
<div class="a" style="left:322px;top:291px;width:1px;height:28px;background:#a0a0a0"></div>
<div class="a" style="left:295px;top:318px;width:28px;height:1px;background:#a0a0a0"></div>
<div class="a" style="left:986px;top:291px;width:1px;height:28px;background:#a0a0a0"></div>
<div class="a" style="left:986px;top:318px;width:28px;height:1px;background:#a0a0a0"></div>
<svg style="left:671px;top:278px" width="9" height="8" viewBox="0 0 9 8"><path d="M7.5,0 V4.5 H1.5" fill="none" stroke="#777" stroke-width="1.1"/><path d="M3.8,2.2 L1.3,4.5 L3.8,6.8" fill="none" stroke="#777" stroke-width="1.5"/></svg>
<svg style="left:671px;top:373px" width="9" height="8" viewBox="0 0 9 8"><path d="M7.5,0 V4.5 H1.5" fill="none" stroke="#777" stroke-width="1.1"/><path d="M3.8,2.2 L1.3,4.5 L3.8,6.8" fill="none" stroke="#777" stroke-width="1.5"/></svg>
<div class="a" style="left:313px;top:368px;width:5px;height:5px;background:#000"></div>

<!-- ============ STATUS BAR ============ -->
<div class="a" style="left:0;top:701px;width:1101px;height:18px;background:#f1f1f1;border-top:1px solid #c6c6c6"></div>
<div class="t" style="left:4px;top:706px;font-size:12px;color:#555">节: 1</div>
<div class="t" style="left:45px;top:706px;font-size:12px;color:#555;letter-spacing:0.25px">第 1 页，共 18 页</div>
<div class="t" style="left:161px;top:706px;font-size:12px;color:#555;letter-spacing:0.3px">17495 个字</div>
<svg style="left:238px;top:700px" width="30" height="19" viewBox="0 0 30 19">
 <path d="M9.8,5.2 L8.5,4.8 H5.5 V15.5 H9.8 L11.4,16.8 L13,15.5 H17.8 M13,5 L14,4.8 H17.8 V6.2" fill="none" stroke="#666" stroke-width="1.1"/>
 <path d="M9.8,5 L11.4,6.3 L13,5 M11.4,6.3 V17.7 M10,16.2 L11.4,17.7 L12.8,16.2" fill="none" stroke="#666" stroke-width="1.1"/>
 <path d="M14.5,8.3 L18.5,13.5 M18.5,8.3 L14.5,13.5" stroke="#666" stroke-width="1.4"/>
</svg>
<div class="t" style="left:274px;top:706px;font-size:12px;color:#555">英语(美国)</div>
<svg style="left:344px;top:700px" width="26" height="19" viewBox="0 0 26 19">
 <circle cx="8.9" cy="7.9" r="2.8" fill="#777"/>
 <rect x="13.2" y="6.2" width="5.6" height="2.4" fill="#777"/>
 <path d="M7.5,12 V17 H18.5 V6.2" fill="none" stroke="#777" stroke-width="1.1"/>
 <g fill="#777"><rect x="12" y="11" width="2" height="1"/><rect x="15" y="11" width="2" height="1"/><rect x="9" y="13" width="2" height="1"/><rect x="12" y="13" width="2" height="1"/><rect x="15" y="13" width="2" height="1"/><rect x="9" y="15" width="2" height="1"/><rect x="12" y="15" width="2" height="1"/><rect x="15" y="15" width="2" height="1"/></g>
</svg>
<!-- view buttons -->
<div class="a" style="left:832px;top:702px;width:38px;height:17px;background:#c6c6c6"></div>
<svg style="left:800px;top:701px" width="100" height="18" viewBox="0 0 100 18" shape-rendering="crispEdges">
 <g fill="none" stroke="#666" stroke-width="1">
  <path d="M6.5,4.5 H12.5 V15.5 H6.5 Z M12.5,4.5 H18.5 V15.5 H12.5"/>
 </g>
 <g fill="#666">
  <rect x="8" y="6" width="9" height="1"/><rect x="8" y="8" width="9" height="1"/><rect x="8" y="10" width="9" height="1"/><rect x="8" y="12" width="9" height="1"/><rect x="8" y="14" width="9" height="1"/>
  <rect x="12" y="15" width="1" height="2"/>
 </g>
 <path d="M44.5,4.5 H57.5 V16.5 H44.5 Z" fill="none" stroke="#555" stroke-width="1.3"/>
 <g fill="#555"><rect x="46" y="7" width="10" height="1"/><rect x="46" y="9" width="10" height="1"/><rect x="46" y="11" width="10" height="1"/><rect x="46" y="13" width="10" height="1"/></g>
 <path d="M89,15.5 H82.5 V4.5 H93.5 V10" fill="none" stroke="#666" stroke-width="1"/>
 <g fill="#777"><rect x="84" y="6" width="7" height="1"/><rect x="84" y="8" width="7" height="1"/><rect x="84" y="10" width="4" height="1"/><rect x="84" y="12" width="4" height="1"/></g>
</svg>
<svg style="left:800px;top:701px" width="100" height="18" viewBox="0 0 100 18">
 <circle cx="92.3" cy="13.8" r="3.6" fill="#f1f1f1" stroke="#666" stroke-width="1.1"/>
 <path d="M90.5,11.5 C92,12.5 91,14 92.5,14.5 C93.5,15 93,16.5 92.5,17 M93.5,10.8 C93.5,12 95,12.5 95.8,13" fill="none" stroke="#666" stroke-width="1.1"/>
</svg>
<div class="a" style="left:913px;top:711px;width:6px;height:2px;background:#555"></div>
<div class="a" style="left:923px;top:711px;width:100px;height:1px;background:#a6a6a6"></div>
<div class="a" style="left:974px;top:706px;width:4px;height:10px;background:#666;border-radius:1px"></div>
<div class="a" style="left:1027px;top:711px;width:8px;height:2px;background:#555"></div>
<div class="a" style="left:1030px;top:708px;width:2px;height:8px;background:#555"></div>
<div class="t" style="left:1051px;top:706px;font-size:12px;color:#555">120%</div>

</body></html>
